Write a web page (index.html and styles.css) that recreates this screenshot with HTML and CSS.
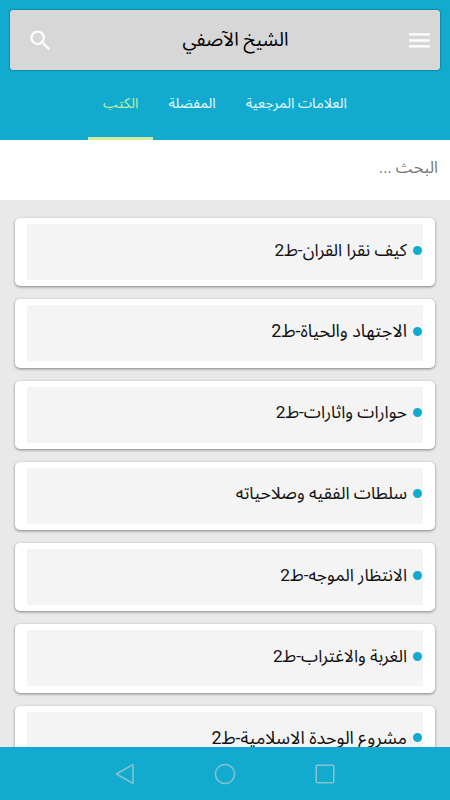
FILE: index.html
```html
<!DOCTYPE html>
<html lang="ar" dir="rtl">
<head>
    <meta charset="UTF-8">
    <meta name="viewport" content="width=device-width, initial-scale=1.0">
    <title>الشيخ الآصفي</title>
    <link rel="stylesheet" href="styles.css">
</head>
<body>
<div class="app">
    <header class="header">
        <div class="toolbar">
            <svg class="icon" viewBox="0 0 24 24"><path d="M2 5h20v2.3H2zM2 10.8h20v2.3H2zM2 16.5h20v2.3H2z"/></svg>
            <h1 class="title">الشيخ الآصفي</h1>
            <svg class="icon search-icon" viewBox="0 0 24 24"><path d="M15.5 14h-.79l-.28-.27A6.471 6.471 0 0 0 16 9.5 6.5 6.5 0 1 0 9.5 16c1.61 0 3.09-.59 4.23-1.57l.27.28v.79l5 4.99L20.49 19l-4.99-5zm-6 0C7.01 14 5 11.99 5 9.5S7.01 5 9.5 5 14 7.01 14 9.5 11.99 14 9.5 14z"/></svg>
        </div>
        <nav class="tabs">
            <a class="tab">العلامات المرجعية</a>
            <a class="tab">المفضلة</a>
            <a class="tab active">الكتب</a>
        </nav>
    </header>
    <div class="search">البحث ...</div>
    <main class="list">
        <div class="card"><div class="book"><i class="dot"></i><span>كيف نقرا القران-ط2</span></div></div>
        <div class="card"><div class="book wide"><i class="dot"></i><span>الاجتهاد والحياة-ط2</span></div></div>
        <div class="card"><div class="book"><i class="dot"></i><span>حوارات واثارات-ط2</span></div></div>
        <div class="card"><div class="book"><i class="dot"></i><span>سلطات الفقيه وصلاحياته</span></div></div>
        <div class="card"><div class="book"><i class="dot"></i><span>الانتظار الموجه-ط2</span></div></div>
        <div class="card"><div class="book"><i class="dot"></i><span>الغربة والاغتراب-ط2</span></div></div>
        <div class="card"><div class="book wide"><i class="dot"></i><span>مشروع الوحدة الاسلامية-ط2</span></div></div>
    </main>
    <footer class="navbar">
        <svg class="nav-icon" viewBox="0 0 22 22"><rect x="2.2" y="2.2" width="17.6" height="17.6" rx="1"/></svg>
        <svg class="nav-icon" viewBox="0 0 22 22"><circle cx="11" cy="11" r="9.6"/></svg>
        <svg class="nav-icon" viewBox="0 0 22 22"><path d="M19 1.6v18.8L2.4 11z"/></svg>
    </footer>
</div>
</body>
</html>
```

FILE: styles.css
```css
* {
    box-sizing: border-box;
}
html, body {
    margin: 0;
    height: 100%;
    overflow: hidden;
}
body {
    font-family: Roboto, "Noto Sans Arabic", "DejaVu Sans", sans-serif;
    color: #111;
}
.app {
    display: flex;
    flex-direction: column;
    height: 100vh;
    background: #e9e9e9;
}

/* header */
.header {
    flex: none;
    height: 140px;
    padding: 10px 10px 0;
    background: #12abcf;
}
.toolbar {
    display: flex;
    align-items: center;
    justify-content: space-between;
    height: 60px;
    padding: 0 8px;
    border-radius: 3px;
    background: #d7d7d7;
    box-shadow: 0 0 2px rgba(0, 0, 0, .6);
}
.icon {
    width: 25px;
    height: 25px;
    fill: #fff;
}
.search-icon {
    width: 27px;
    height: 27px;
    margin-left: 9px;
}
.title {
    margin: 0 0 0 10px;
    font-size: 19px;
    font-weight: 400;
    color: #000;
}
.tabs {
    display: flex;
    justify-content: center;
    height: 70px;
}
.tab {
    padding: 0 15px;
    font-size: 14.3px;
    line-height: 66px;
    white-space: nowrap;
    color: #e8fbff;
}
.tab.active {
    border-bottom: 3px solid #d3eba0;
    color: #b9efa0;
}

.search {
    flex: none;
    height: 60px;
    padding: 0 12px;
    background: #fff;
    font-size: 16.4px;
    line-height: 56px;
    color: #777;
}

/* books */
.list {
    flex: 1;
    min-height: 0;
    display: flex;
    flex-direction: column;
    gap: 13px;
    padding: 18px 15px 0;
    overflow: hidden;
}
.card {
    flex: none;
    height: 68.3px;
    padding: 6px 12px;
    border-radius: 5px;
    background: #fff;
    box-shadow: 0 1px 3px rgba(0, 0, 0, .45);
}
.book {
    display: flex;
    align-items: center;
    gap: 6px;
    height: 56px;
    padding: 0 1px 4px 0;
    background: #f4f4f4;
    font-size: 17.3px;
    white-space: nowrap;
}
.book.wide {
    font-size: 17.9px;
}
.dot {
    width: 9px;
    height: 9px;
    border-radius: 50%;
    background: #12abcf;
}

/* system buttons */
.navbar {
    flex: none;
    display: flex;
    justify-content: center;
    align-items: center;
    gap: 78px;
    height: 53px;
    background: #12abcf;
}
.nav-icon {
    width: 22px;
    height: 22px;
    fill: none;
    stroke: #87c3cc;
    stroke-width: 1.5;
    stroke-linejoin: round;
}
```
